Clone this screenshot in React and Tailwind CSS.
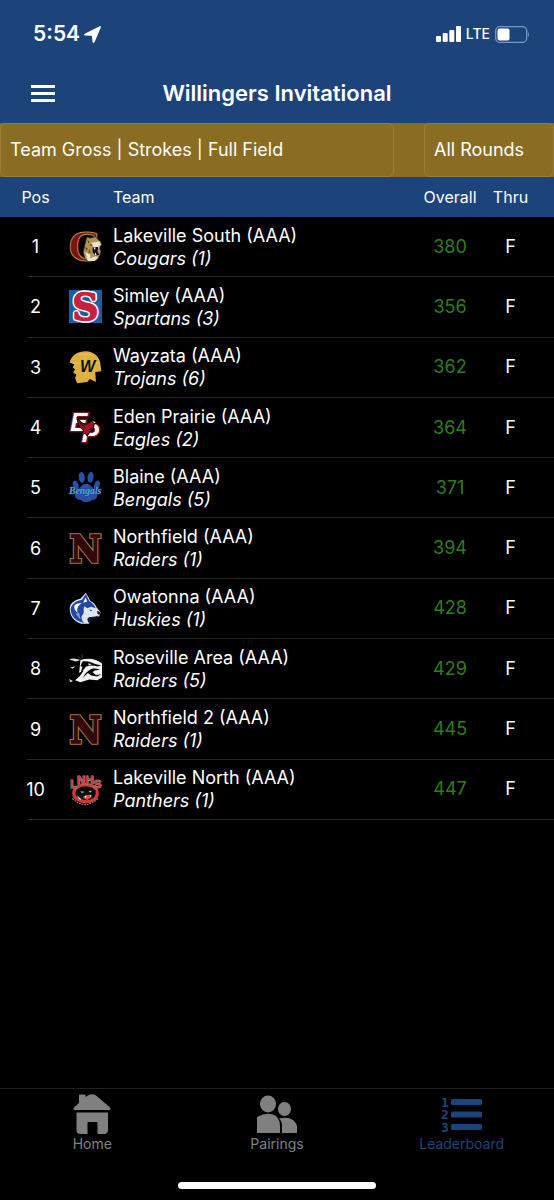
import React, { useState } from 'react';

const CougarsLogo = () => (
    <svg viewBox="0 0 98 98" className="w-[33px] h-[33px] overflow-visible" aria-hidden="true">
        <text x="-3" y="92" fontFamily="Liberation Serif" fontWeight="700" fontSize="134" fill="#7d1412" stroke="#b08a4c" strokeWidth="3">C</text>
        <path d="M50 30 L54 20 L62 24 L78 20 L84 26 L94 34 L97 44 L90 52 L95 62 L92 76 L80 90 L62 94 L48 88 L42 66 Z" fill="#b39552" stroke="#241608" strokeWidth="2" />
        <path d="M66 38 L90 34 L95 44 L84 52 L72 50 Z M48 66 L62 72 L64 84 L78 78 L88 80 L76 92 L56 92 Z" fill="#e9e3d4" />
        <path d="M70 52 L90 50 L84 62 L90 74 L78 76 L70 66 Z" fill="#140b08" />
        <path d="M54 30 L61 34 L58 40 Z M60 44 L70 42 L66 48 Z M48 50 L55 54 L53 64 Z M60 56 L64 66 L58 70 Z" fill="#5d451d" />
        <path d="M73 52 L77 60 L79 52 Z M86 50 L89 57 L91 49 Z M76 74 L79 67 L82 75 Z" fill="#fff" />
    </svg>
);

const SpartansLogo = () => (
    <svg viewBox="0 0 98 98" className="w-[33px] h-[33px] overflow-visible" aria-hidden="true">
        <rect width="98" height="98" fill="#1c5ba6" />
        <g fontFamily="DejaVu Serif" fontWeight="700" fontSize="108" textAnchor="middle">
            <text x="49" y="88" fill="#fff" stroke="#fff" strokeWidth="13" strokeLinejoin="bevel">S</text>
            <text x="49" y="88" fill="#c9203c" stroke="#c9203c" strokeWidth="4" strokeLinejoin="bevel">S</text>
        </g>
    </svg>
);

const TrojansLogo = () => (
    <svg viewBox="0 0 98 98" className="w-[33px] h-[33px] overflow-visible" aria-hidden="true">
        <path d="M2 34 C8 12 26 1 50 1 C76 1 93 20 94 44 L96 60 L78 62 L80 92 L62 83 L54 92 L24 96 L18 80 L22 70 L12 64 L18 55 L11 48 L16 40 Z" fill="#deb040" />
        <path d="M12 36 H92 M48 8 V76 M26 14 Q48 4 72 14" fill="none" stroke="#ecca78" strokeWidth="2" />
        <text x="55" y="61" textAnchor="middle" fontFamily="Liberation Sans" fontWeight="700" fontStyle="italic" fontSize="48" fill="#111">W</text>
    </svg>
);

const EaglesLogo = () => (
    <svg viewBox="0 0 98 98" className="w-[33px] h-[33px] overflow-visible" aria-hidden="true">
        <g fontFamily="Liberation Sans" fontWeight="700" fontStyle="italic" fill="#fff" stroke="#7d1426" strokeWidth="8" paintOrder="stroke">
            <text x="4" y="59" fontSize="76">E</text>
            <text x="38" y="93" fontSize="76">P</text>
        </g>
        <path d="M24 18 C30 30 40 38 50 40 C58 38 62 30 70 28 L82 36 L74 39 C76 48 70 58 62 62 L54 74 L48 66 L36 70 L44 58 C32 50 24 34 24 18 Z" fill="#a31327" stroke="#170405" strokeWidth="3" />
        <path d="M32 34 L46 48 M68 52 L58 56" stroke="#170405" strokeWidth="3" />
        <path d="M72 30 L80 35 L74 36 Z" fill="#fff" />
    </svg>
);

const BengalsLogo = () => (
    <svg viewBox="0 0 98 98" className="w-[33px] h-[33px] overflow-visible" aria-hidden="true">
        <g fill="#2b4fa5">
            <ellipse cx="38" cy="19" rx="9" ry="16" transform="rotate(-6 38 19)" />
            <ellipse cx="64" cy="19" rx="9" ry="16" transform="rotate(8 64 19)" />
            <ellipse cx="20" cy="42" rx="8" ry="14" transform="rotate(-18 20 42)" />
            <ellipse cx="83" cy="42" rx="8" ry="14" transform="rotate(18 83 42)" />
            <path d="M51 38 C64 38 68 50 80 60 C90 72 82 86 68 86 C58 94 44 94 36 86 C20 86 12 72 22 60 C34 50 38 38 51 38 Z" />
        </g>
        <text x="48" y="67" textAnchor="middle" fontFamily="Liberation Serif" fontWeight="700" fontStyle="italic" fontSize="29" fill="#4fa9d6" stroke="#1c3c86" strokeWidth="2" paintOrder="stroke">Bengals</text>
    </svg>
);

const NorthfieldLogo = () => (
    <svg viewBox="0 0 98 98" className="w-[33px] h-[33px] overflow-visible" aria-hidden="true">
        <g fontFamily="DejaVu Serif Condensed, DejaVu Serif" fontWeight="700" fontSize="112" textAnchor="middle">
            <text x="49" y="90" fill="#a2703f" stroke="#a2703f" strokeWidth="11">N</text>
            <text x="49" y="90" fill="#31060d" stroke="#31060d" strokeWidth="4">N</text>
        </g>
    </svg>
);

const HuskiesLogo = () => (
    <svg viewBox="0 0 98 98" className="w-[33px] h-[33px] overflow-visible" aria-hidden="true">
        <path d="M50 2 L63 26 C72 30 78 36 82 46 L94 60 L90 72 L76 76 L60 80 L60 94 L36 94 C16 88 2 72 2 48 C4 32 16 24 34 20 Z" fill="#dfe6f2" />
        <path d="M50 6 L60 27 C70 32 76 40 79 48 L66 44 L54 48 L46 42 C40 52 48 60 40 68 C34 74 38 86 46 92 C22 88 4 72 5 48 C10 34 22 26 38 24 Z" fill="#2146a8" />
        <path d="M49 16 L54 28 L42 32 Z M16 40 C22 34 30 32 38 34 C26 40 22 50 26 62 C18 56 14 48 16 40 Z" fill="#fff" />
        <path d="M20 64 L30 62 L34 82 Z" fill="#8ba3da" />
        <path d="M60 52 L70 54 L64 57 Z" fill="#2146a8" />
        <path d="M84 56 L94 60 L90 68 L84 64 Z M60 74 C70 76 80 72 88 70 L78 80 L64 82 L58 92 L54 80 Z" fill="#101a3c" />
    </svg>
);

const RosevilleLogo = () => (
    <svg viewBox="0 0 98 98" className="w-[33px] h-[33px] overflow-visible" aria-hidden="true">
        <path d="M34 24 C56 16 82 20 98 34 L98 76 L84 84 L60 82 L34 90 L18 84 L32 72 L44 54 L30 62 L32 42 Z" fill="#f1f1f1" />
        <path d="M0 22 Q16 16 34 24 L20 28 Z M0 80 L12 86 L4 90 Z M4 46 L20 42 L10 50 Z" fill="#d8d8d8" />
        <path d="M40 28 C54 26 66 30 78 36 L96 40 L84 43 C72 39 60 39 50 44 L34 64 L40 44 L34 42 Z" fill="#050505" />
        <path d="M60 54 C68 47 80 48 92 53 L76 55 L70 60 L80 68 L96 66 L84 73 L66 70 L56 62 L40 78 L50 62 Z" fill="#050505" />
        <path d="M56 34 L68 36 L60 39 Z" fill="#fff" />
        <path d="M38 6 L40 18 M26 12 L36 22" stroke="#555" strokeWidth="2" />
    </svg>
);

const PanthersLogo = () => (
    <svg viewBox="0 0 98 98" className="w-[33px] h-[33px] overflow-visible" aria-hidden="true">
        <path d="M14 60 C16 26 82 26 84 60 C84 94 16 94 14 60 Z" fill="#17191b" stroke="#d23a35" strokeWidth="9" />
        <path d="M10 76 Q48 112 88 74" fill="none" stroke="#75877d" strokeWidth="4" strokeDasharray="5 3" />
        <path d="M24 52 L36 42 L64 42 L80 52 L74 72 L50 78 L30 66 Z" fill="#080a0b" />
        <path d="M34 54 L46 56 L38 60 Z M58 54 L68 52 L64 59 Z" fill="#9fc5b5" />
        <path d="M44 68 L62 64 L68 72 L54 80 L42 74 Z" fill="#e2493e" />
        <path d="M46 68 L50 75 L53 67 Z M62 65 L64 72 L67 67 Z M24 66 L30 78 L38 80 Z" fill="#f2f2f2" />
        <g fontFamily="Liberation Sans" fontWeight="700" fontSize="34" textAnchor="middle" fill="#d33b38" stroke="#a58c88" strokeWidth="3" paintOrder="stroke">
            <text x="14" y="44">L</text>
            <text x="36" y="33">N</text>
            <text x="61" y="33">H</text>
            <text x="85" y="44">S</text>
        </g>
    </svg>
);

const teams = [
    { pos: 1, name: 'Lakeville South (AAA)', mascot: 'Cougars (1)', overall: 380, Logo: CougarsLogo },
    { pos: 2, name: 'Simley (AAA)', mascot: 'Spartans (3)', overall: 356, Logo: SpartansLogo },
    { pos: 3, name: 'Wayzata (AAA)', mascot: 'Trojans (6)', overall: 362, Logo: TrojansLogo },
    { pos: 4, name: 'Eden Prairie (AAA)', mascot: 'Eagles (2)', overall: 364, Logo: EaglesLogo },
    { pos: 5, name: 'Blaine (AAA)', mascot: 'Bengals (5)', overall: 371, Logo: BengalsLogo },
    { pos: 6, name: 'Northfield (AAA)', mascot: 'Raiders (1)', overall: 394, Logo: NorthfieldLogo },
    { pos: 7, name: 'Owatonna (AAA)', mascot: 'Huskies (1)', overall: 428, Logo: HuskiesLogo },
    { pos: 8, name: 'Roseville Area (AAA)', mascot: 'Raiders (5)', overall: 429, Logo: RosevilleLogo },
    { pos: 9, name: 'Northfield 2 (AAA)', mascot: 'Raiders (1)', overall: 445, Logo: NorthfieldLogo },
    { pos: 10, name: 'Lakeville North (AAA)', mascot: 'Panthers (1)', overall: 447, Logo: PanthersLogo },
];

const HomeIcon = () => (
    <svg viewBox="0 0 40 40" className="w-10 h-10" fill="currentColor" aria-hidden="true">
        <path d="M8 0.5 H12.5 Q13.5 0.5 13.5 1.5 V3 L16 1.4 Q20 -1 24 1.4 L37.5 13 Q40 16 37 16 H3 Q0 16 2.5 13 L7 9 V1.5 Q7 0.5 8 0.5 Z" />
        <path d="M4.5 18.5 H36 V36 Q36 40 32 40 H25.5 V29 Q25.5 28 24.5 28 H16.5 Q15.5 28 15.5 29 V40 H8.5 Q4.5 40 4.5 36 Z" />
    </svg>
);

const PairingsIcon = () => (
    <svg viewBox="0 0 40 40" className="w-10 h-10" fill="currentColor" aria-hidden="true">
        <ellipse cx="11" cy="10" rx="8" ry="8.5" />
        <path d="M0 39 V23 Q11 17 19 22 Q23 26 23 32 V39 Z" />
        <ellipse cx="27.5" cy="15" rx="6.5" ry="7" />
        <path d="M22 24.5 Q31 22.5 36 26 Q40.500 30 40.500 35 V39 H25 V32 Q25 27 22 24.5 Z" />
    </svg>
);

const LeaderboardIcon = () => (
    <svg viewBox="0 0 40 40" className="w-10 h-10 overflow-visible" fill="currentColor" aria-hidden="true">
        <g fontFamily="DejaVu Sans Mono" fontWeight="700" fontSize="13">
            <text x="-1" y="13">1</text>
            <text x="-1" y="25">2</text>
            <text x="-1" y="38">3</text>
        </g>
        <rect x="9" y="5" width="31" height="6" rx="1.5" />
        <rect x="9" y="17.500" width="31" height="6" rx="1.5" />
        <rect x="9" y="30" width="31" height="6" rx="1.5" />
    </svg>
);

const tabs = [
    { id: 'home', label: 'Home', Icon: HomeIcon },
    { id: 'pairings', label: 'Pairings', Icon: PairingsIcon },
    { id: 'leaderboard', label: 'Leaderboard', Icon: LeaderboardIcon },
];

const StatusBar = () => (
    <div className="flex items-center justify-between h-16 pl-[33px] pr-6 pt-1">
        <div className="flex items-center gap-1 text-[21px] font-semibold">
            5:54
            <svg viewBox="0 0 16 16" className="w-[17px] h-[17px]" fill="currentColor" aria-hidden="true">
                <path d="M14.700 0.300 Q16.300 -0.200 15.800 1.300 L10 15.100 Q8.800 16.800 8 15.100 L7.600 10 Q7.500 9.100 6.600 9.100 L1 9 Q-0.900 8.400 0.700 7.300 Z" />
            </svg>
        </div>
        <div className="flex items-center gap-[5px]">
            <svg viewBox="0 0 25 16" className="w-[25px] h-4" fill="currentColor" aria-hidden="true">
                <rect x="0" y="10" width="5" height="6" rx="1" />
                <rect x="6.700" y="7" width="5" height="9" rx="1" />
                <rect x="13.300" y="4" width="5" height="12" rx="1" />
                <rect x="20" y="0" width="5" height="16" rx="1" />
            </svg>
            <span className="text-sm font-medium">LTE</span>
            <svg viewBox="0 0 35 17" className="w-[35px] h-[17px]" aria-hidden="true">
                <rect x="0.700" y="0.700" width="31" height="15.600" rx="4" fill="none" stroke="#7d97b9" strokeWidth="1.300" />
                <rect x="2.500" y="2.500" width="12" height="12" rx="2" fill="#fff" />
                <path d="M33 6 Q35 8.500 33 11 Z" fill="#7d97b9" />
            </svg>
        </div>
    </div>
);

const TeamRow = ({ team }) => {
    const { pos, name, mascot, overall, Logo } = team;

    return (
        <tr className="h-[60px] text-lg">
            {/* the divider starts under the position number, not at the screen edge */}
            <td className="relative pl-[2px] text-center after:absolute after:bottom-0 after:left-[27px] after:right-0 after:h-px after:bg-[#262626]">
                {pos}
            </td>
            <td className="border-b border-[#262626]"><Logo /></td>
            <td className="border-b border-[#262626] leading-[23px]">
                <div>{name}</div>
                <div className="italic">{mascot}</div>
            </td>
            <td className="border-b border-[#262626] text-center text-[#2f7d1c]">{overall}</td>
            <td className="border-b border-[#262626] pr-5 text-center">F</td>
        </tr>
    );
};

const App = () => {
    const [activeTab, setActiveTab] = useState('leaderboard');

    return (
        <div className="flex flex-col min-h-screen bg-black text-white font-['Inter',sans-serif]">
            <header className="bg-[#1c447b]">
                <StatusBar />
                <div className="grid grid-cols-[56px_1fr_56px] items-center h-[59px]">
                    <button aria-label="Menu" className="flex flex-col gap-1 pl-[31px]">
                        <span className="w-6 h-[3px] bg-white" />
                        <span className="w-6 h-[3px] bg-white" />
                        <span className="w-6 h-[3px] bg-white" />
                    </button>
                    <h1 className="text-center text-[22px] font-semibold">Willingers Invitational</h1>
                </div>
            </header>

            <div className="flex justify-between h-[54px] bg-[#8a6d22] text-lg">
                <select aria-label="Leaderboard" className="appearance-none w-[394px] px-[9px] rounded-md border border-[#9a7d38]">
                    <option>Team Gross | Strokes | Full Field</option>
                </select>
                <select aria-label="Round" className="appearance-none w-[130px] px-[9px] rounded-md border border-[#9a7d38]">
                    <option>All Rounds</option>
                </select>
            </div>

            <main className="grow">
                <table className="w-full h-[643px] table-fixed border-separate border-spacing-0">
                    <colgroup>
                        <col className="w-[69px]" />
                        <col className="w-[44px]" />
                        <col />
                        <col className="w-[74px]" />
                        <col className="w-[67px]" />
                    </colgroup>
                    <thead>
                        <tr className="h-10 bg-[#1c447b] text-base">
                            <th className="pl-[2px] font-normal">Pos</th>
                            <th />
                            <th className="text-left font-normal">Team</th>
                            <th className="font-normal">Overall</th>
                            <th className="pr-5 font-normal">Thru</th>
                        </tr>
                    </thead>
                    <tbody>
                        {teams.map((team) => (
                            <TeamRow key={team.pos} team={team} />
                        ))}
                    </tbody>
                </table>
            </main>

            <nav className="border-t border-[#1f1f1f]">
                <div className="grid grid-cols-3 pt-[5px]">
                    {tabs.map(({ id, label, Icon }) => (
                        <button
                            key={id}
                            onClick={() => setActiveTab(id)}
                            className={`flex flex-col items-center text-sm ${activeTab === id ? 'text-[#1c447b]' : 'text-[#808080]'}`}
                        >
                            <Icon />
                            {label}
                        </button>
                    ))}
                </div>
                <div className="w-[198px] h-[7px] mx-auto mt-7 mb-[11px] rounded-full bg-white" />
            </nav>
        </div>
    );
};

export default App;
